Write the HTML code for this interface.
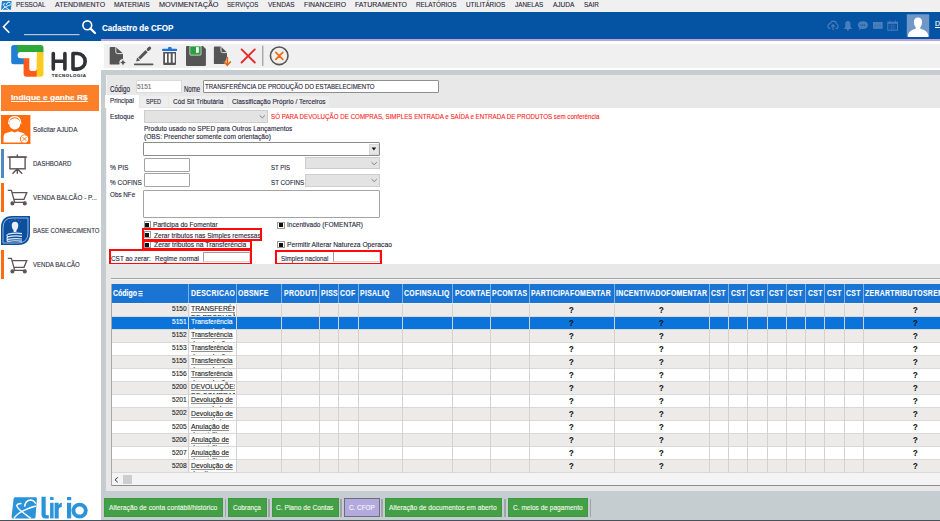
<!DOCTYPE html><html><head><meta charset="utf-8"><style>
html,body{margin:0;padding:0;width:940px;height:521px;overflow:hidden;background:#fff;position:relative;font-family:"Liberation Sans",sans-serif}
.b{position:absolute;box-sizing:border-box}
.t{position:absolute;white-space:nowrap;line-height:1;transform-origin:0 0;-webkit-text-stroke:0.12px currentColor}
svg{position:absolute;overflow:visible}

</style></head><body>
<div class="b" style="left:0.00px;top:0.00px;width:940.00px;height:11.60px;background:#f0f0f0"></div>
<span class="t" style="transform:scaleX(0.7783);left:16.20px;top:0.64px;font-size:8.1px;color:#26263a;">PESSOAL</span>
<span class="t" style="transform:scaleX(0.8624);left:54.80px;top:0.64px;font-size:8.1px;color:#26263a;">ATENDIMENTO</span>
<span class="t" style="transform:scaleX(0.8275);left:113.70px;top:0.64px;font-size:8.1px;color:#26263a;">MATERIAIS</span>
<span class="t" style="transform:scaleX(0.9017);left:158.50px;top:0.64px;font-size:8.1px;color:#26263a;">MOVIMENTAÇÃO</span>
<span class="t" style="transform:scaleX(0.7544);left:226.60px;top:0.64px;font-size:8.1px;color:#26263a;">SERVIÇOS</span>
<span class="t" style="transform:scaleX(0.7968);left:267.70px;top:0.64px;font-size:8.1px;color:#26263a;">VENDAS</span>
<span class="t" style="transform:scaleX(0.8404);left:303.60px;top:0.64px;font-size:8.1px;color:#26263a;">FINANCEIRO</span>
<span class="t" style="transform:scaleX(0.8601);left:355.00px;top:0.64px;font-size:8.1px;color:#26263a;">FATURAMENTO</span>
<span class="t" style="transform:scaleX(0.7859);left:416.00px;top:0.64px;font-size:8.1px;color:#26263a;">RELATÓRIOS</span>
<span class="t" style="transform:scaleX(0.7839);left:466.40px;top:0.64px;font-size:8.1px;color:#26263a;">UTILITÁRIOS</span>
<span class="t" style="transform:scaleX(0.7844);left:515.30px;top:0.64px;font-size:8.1px;color:#26263a;">JANELAS</span>
<span class="t" style="transform:scaleX(0.8034);left:553.20px;top:0.64px;font-size:8.1px;color:#26263a;">AJUDA</span>
<span class="t" style="transform:scaleX(0.7823);left:584.30px;top:0.64px;font-size:8.1px;color:#26263a;">SAIR</span>
<svg style="left:1.2px;top:0.9px" width="10.6" height="8.9" viewBox="11.4 497.2 25.6 21.3" preserveAspectRatio="none"><g transform="translate(11 496.5) scale(1) translate(-11 -496.5)"><path d="M15.2 497.3 H35.4 Q37.1 497.3 36.9 499 L35.5 516.9 Q35.4 518.4 33.9 518.4 H13 Q11.4 518.4 11.6 516.8 L13.6 498.8 Q13.8 497.3 15.2 497.3Z" fill="#1f80d2"/><path d="M21.6 503.6 Q18 503.2 16.6 505.4 Q17.6 508.5 21.8 511.5 Q26 515 30.8 518.4" stroke="#fff" stroke-width="2.2" fill="none"/><path d="M13.8 518.4 Q18 513 24.7 510.2 Q30 507.6 35.9 506" stroke="#fff" stroke-width="2.2" fill="none"/><path d="M24.6 506.6 Q25.4 500.5 30.2 500 Q33.6 500 35.8 503.6" stroke="#fff" stroke-width="2.2" fill="none"/></g></svg>
<div class="b" style="left:0.00px;top:11.60px;width:940.00px;height:27.10px;background:#0553a3"></div>
<div class="b" style="left:0.00px;top:38.70px;width:101.00px;height:2.80px;background:#0553a3"></div>
<div class="b" style="left:101.00px;top:38.70px;width:839.00px;height:2.80px;background:#b6a6d8"></div>
<svg style="left:0;top:0" width="940" height="45"><path d="M9.3 20.8 L3.5 26.8 L9.3 32.8" stroke="#fff" stroke-width="1.6" fill="none"/><rect x="24" y="34" width="55.5" height="1.2" fill="#b9c3d6"/><circle cx="87.3" cy="25.3" r="4.4" stroke="#fff" stroke-width="1.6" fill="none"/><path d="M90.5 28.6 L95 33" stroke="#fff" stroke-width="2.2" stroke-linecap="round"/></svg>
<span class="t" style="transform:scaleX(0.8262);left:101.50px;top:22.50px;font-size:9.8px;color:#fff;font-weight:700;">Cadastro de CFOP</span>
<div class="b" style="left:0.00px;top:41.50px;width:101.00px;height:479.50px;background:#fff"></div>
<div class="b" style="left:1.20px;top:84.60px;width:98.00px;height:26.40px;background:#fe7f2a"></div>
<span class="t" style="transform:scaleX(1.0334);left:10.80px;top:94.04px;font-size:8.1px;color:#fff;font-weight:700;text-decoration-line:underline;">Indique e ganhe R$</span>
<div class="b" style="left:104.20px;top:44.20px;width:835.80px;height:23.50px;background:#f0f0f0"></div>
<div class="b" style="left:101.00px;top:69.50px;width:839.00px;height:450.10px;background:#c6cdd1"></div>
<div class="b" style="left:106.00px;top:75.00px;width:834.00px;height:415.50px;background:#e8e8e8"></div>
<div class="b" style="left:106.00px;top:107.50px;width:834.00px;height:156.50px;background:#fff"></div>
<div class="b" style="left:0.00px;top:519.80px;width:940.00px;height:1.20px;background:#4a5158"></div>
<svg style="left:8px;top:43px" width="40" height="37" viewBox="0 0 40 37"><path d="M5.7 2.1 H16 V21.3 H5.7 Q3.2 21.3 3.2 18.8 V4.6 Q3.2 2.1 5.7 2.1Z" fill="#1f7fd4"/><path d="M9.2 2.1 H32.5 Q35.5 2.1 35.5 5.1 V9.4 H9.2Z" fill="#2ea836"/><path d="M28.6 9.2 H35.5 V30.8 Q35.5 33.8 32.5 33.8 H28.6Z" fill="#fbcb1e"/><path d="M15.6 14.6 H28.8 V33.8 H18.6 Q15.6 33.8 15.6 30.8Z" fill="#fe5a1a"/><path d="M12.6 8.9 H28.8 V25.2 Q28.8 28 26.2 28 H24 Q21.3 28 21.3 25.2 V15.3 H12.6 Q9.6 15.3 9.6 12.1 Q9.6 8.9 12.6 8.9Z" fill="#fff"/></svg>
<svg style="left:0;top:0" width="100" height="90"><path d="M53.3 53.5 V69.1 M64.9 53.5 V69.1 M53.3 61.3 H64.9 M73 53.5 V69.1" stroke="#2f3236" stroke-width="3.6" stroke-linecap="round" fill="none"/><path d="M73 53.5 H77.4 A7.8 7.8 0 0 1 77.4 69.1 H73" stroke="#2f3236" stroke-width="3.6" stroke-linejoin="round" fill="none"/></svg>
<span class="t" style="transform:scaleX(1.0000);left:51.70px;top:73.88px;font-size:4.4px;color:#2f3236;font-weight:700;letter-spacing:0.55px;">TECNOLOGIA</span>
<svg style="left:0;top:113px" width="32" height="34" viewBox="0 0 32 34"><rect x="1" y="2" width="29.4" height="29" fill="#fe6c10"/><circle cx="14.7" cy="10.8" r="5.6" fill="#fff"/><path d="M8.5 11 Q8.5 3.6 14.7 3.6 Q20.9 3.6 20.9 11" stroke="#fff" stroke-width="1.1" fill="none"/><path d="M3.6 29.5 V23.5 Q3.6 20 8 19.5 L12 18.3 Q14.7 20.5 17.4 18.3 L21.5 19.5 Q25.7 20.3 25.7 23.5 V29.5Z" fill="#fff"/><circle cx="24.5" cy="26" r="4.6" fill="#fe6c10"/><circle cx="24.5" cy="26" r="3.7" fill="#fff"/><path d="M22.6 24.1 L26.4 27.9 M26.4 24.1 L22.6 27.9" stroke="#fe6c10" stroke-width="0.9"/></svg>
<span class="t" style="transform:scaleX(0.7852);left:32.80px;top:125.93px;font-size:8.0px;color:#2e2e3e;">Solicitar AJUDA</span>
<div class="b" style="left:1.00px;top:149.00px;width:3.20px;height:29.00px;background:#4f88c6"></div>
<svg style="left:0;top:147px" width="32" height="34" viewBox="0 0 32 34" fill="none" stroke="#5f5455" stroke-width="1.4"><path d="M7.5 10.1 H27.1"/><path d="M17.3 10.1 V7.6"/><rect x="9.9" y="10.1" width="15.2" height="11.7"/><path d="M17.3 21.8 V26.7 M17.3 21.8 L12.5 26.7 M17.3 21.8 L22.2 26.7"/></svg>
<span class="t" style="transform:scaleX(0.8197);left:32.70px;top:160.04px;font-size:7.4px;color:#2e2e3e;">DASHBOARD</span>
<div class="b" style="left:1.00px;top:182.60px;width:3.20px;height:29.10px;background:#fe6c10"></div>
<svg style="left:0;top:181px" width="32" height="34" viewBox="0 0 32 34" fill="none" stroke="#5f5455" stroke-width="1.3"><path d="M7.8 9.3 H11.4 L14.7 21.3 H25.8"/><path d="M12.2 11.6 H26.8 L24 18.3 H13.9"/><circle cx="12.4" cy="22.4" r="1.4" fill="#5f5455"/><circle cx="24.8" cy="22.4" r="1.4" fill="#5f5455"/></svg>
<span class="t" style="transform:scaleX(0.8644);left:32.70px;top:194.14px;font-size:7.4px;color:#2e2e3e;">VENDA BALCÃO - P...</span>
<svg style="left:0;top:214px" width="32" height="34" viewBox="0 0 32 34"><path d="M12 2 H30 V19 Q30 31 18 31 H1 V14 Q1 2 12 2Z" fill="#0c4f9e"/><path d="M12.3 4 H28 V18.8 Q28 29 17.8 29 H3 V14 Q3 4 12.3 4Z" fill="none" stroke="#cfe0f2" stroke-width="0.7"/><path d="M13.6 16.6 Q11.7 14.2 11.7 11.4 Q11.7 7.8 15 7.8 Q18.3 7.8 18.3 11.4 Q18.3 14.2 16.4 16.6 V18 H13.6Z" fill="#e6eef8"/><path d="M10 8.3 L9.2 7.6 M20 8.3 L20.8 7.6 M15 6 V5.2 M11.8 6.6 L11.3 5.9 M18.2 6.6 L18.7 5.9" stroke="#9fbce0" stroke-width="0.6"/><path d="M8 20.2 Q15 18.6 22 19.6 M7.5 22.8 Q15 21.3 22 22.3 M7.5 25.4 Q15 24 22 25 M7.5 20.2 Q6.4 21.5 7.5 22.8 Q6.4 24.1 7.5 25.4 Q6.6 26.8 7.8 27.3 Q15 26.3 22 27.2" stroke="#e6eef8" stroke-width="1.2" fill="none"/></svg>
<span class="t" style="transform:scaleX(0.8045);left:32.70px;top:227.34px;font-size:7.4px;color:#2e2e3e;">BASE CONHECIMENTO</span>
<div class="b" style="left:1.00px;top:250.00px;width:3.20px;height:29.40px;background:#fe6c10"></div>
<svg style="left:0;top:249px" width="32" height="34" viewBox="0 0 32 34" fill="none" stroke="#5f5455" stroke-width="1.3"><path d="M7.8 9.3 H11.4 L14.7 21.3 H25.8"/><path d="M12.2 11.6 H26.8 L24 18.3 H13.9"/><circle cx="12.4" cy="22.4" r="1.4" fill="#5f5455"/><circle cx="24.8" cy="22.4" r="1.4" fill="#5f5455"/></svg>
<span class="t" style="transform:scaleX(0.8190);left:32.70px;top:261.04px;font-size:7.4px;color:#2e2e3e;">VENDA BALCÃO</span>
<svg style="left:0;top:0" width="100" height="521"><path d="M15.2 497.3 H35.4 Q37.1 497.3 36.9 499 L35.5 516.9 Q35.4 518.4 33.9 518.4 H13 Q11.4 518.4 11.6 516.8 L13.6 498.8 Q13.8 497.3 15.2 497.3Z" fill="#2b93d9"/><path d="M21.6 503.6 Q18 503.2 16.6 505.4 Q17.6 508.5 21.8 511.5 Q26 515 30.8 518.4" stroke="#fff" stroke-width="1.4" fill="none"/><path d="M13.8 518.4 Q18 513 24.7 510.2 Q30 507.6 35.9 506" stroke="#fff" stroke-width="1.4" fill="none"/><path d="M24.6 506.6 Q25.4 500.5 30.2 500 Q33.6 500 35.8 503.6" stroke="#fff" stroke-width="1.4" fill="none"/><path d="M41.5 496.7 H45.7 V514 Q45.7 515.2 47 515.2 H48.8 V518.4 H45.5 Q41.5 518.4 41.5 514.5Z" fill="#2b93d9"/><path d="M50.1 496.7 L53.6 497.2 V500.1 H50.1Z" fill="#2b93d9"/><rect x="50.1" y="502.8" width="3.5" height="15.6" fill="#2b93d9"/><path d="M54.6 518.4 V502.8 H58.7 V505 Q59.6 502.8 61.8 502.8 V507 Q58.7 507 58.7 510 V518.4Z" fill="#2b93d9"/><rect x="67" y="497" width="4.2" height="3.2" fill="#2b93d9"/><rect x="67" y="502.8" width="4.2" height="15.6" fill="#2b93d9"/><ellipse cx="79.6" cy="510.6" rx="6.2" ry="5.9" stroke="#2b93d9" stroke-width="3.8" fill="none"/></svg>
<svg style="left:0;top:0" width="300" height="70" viewBox="0 0 300 70"><path d="M110.6 46.9 H115.8 L123 53.6 V60 L119.3 64.6 H110.6 Q109.7 64.6 109.7 63.7 V47.8 Q109.7 46.9 110.6 46.9Z" fill="#555555"/><path d="M115.8 46.9 V52 Q115.8 53.6 117.4 53.6 H123" stroke="#f0f0f0" stroke-width="0.9" fill="none"/><circle cx="123" cy="62.6" r="3.6" fill="#f0f0f0"/><path d="M123 59.8 Q123.5 62.1 125.8 62.6 Q123.5 63.1 123 65.4 Q122.5 63.1 120.2 62.6 Q122.5 62.1 123 59.8Z" fill="#555555"/><path d="M136.1 61.6 L137.1 57.5 L140.2 60.6Z" fill="#555555"/><path d="M139.2 58.5 L146.6 51.1" stroke="#555555" stroke-width="3" /><path d="M148.3 49.4 L149.6 48.1" stroke="#555555" stroke-width="3.1" stroke-linecap="round"/><path d="M134.8 64.3 H152.6" stroke="#555555" stroke-width="1.7" stroke-linecap="round"/><rect x="162" y="48.7" width="15.2" height="2.3" rx="1" fill="#1a73e0"/><rect x="168" y="47" width="3.7" height="2.5" rx="1" fill="#1a73e0"/><path d="M163.2 52 H176 V64 Q176 65 175 65 H164.2 Q163.2 65 163.2 64Z" fill="#555555"/><rect x="165" y="53.5" width="2" height="9.2" fill="#fff"/><rect x="168.7" y="53.5" width="2" height="9.2" fill="#fff"/><rect x="172.7" y="53.5" width="2" height="9.2" fill="#fff"/><path d="M187 46 H203 L205.9 49 V64.9 Q205.9 65.9 204.9 65.9 H187 Q186 65.9 186 64.9 V47 Q186 46 187 46Z" fill="#555555"/><path d="M189.8 46 H201.1 V54.2 Q201.1 55.2 200.1 55.2 H190.8 Q189.8 55.2 189.8 54.2Z" fill="#2ea043" stroke="#fff" stroke-width="0.6"/><rect x="196" y="47.2" width="2.8" height="5.6" fill="#fff"/><path d="M214.8 46.6 H221 L227 52.6 V57 L224.5 64.1 H214.8 Q213.9 64.1 213.9 63.2 V47.5 Q213.9 46.6 214.8 46.6Z" fill="#555555"/><path d="M221 46.6 V51.2 Q221 52.6 222.4 52.6 H227" stroke="#f0f0f0" stroke-width="0.9" fill="none"/><path d="M227.3 57.6 V64" stroke="#e8650f" stroke-width="1.7" stroke-linecap="round"/><path d="M224.3 62 L227.3 65.3 L230.3 62" stroke="#e8650f" stroke-width="1.7" fill="none" stroke-linecap="round" stroke-linejoin="round"/><path d="M241.6 49.4 L254.8 62.5 M254.8 49.4 L241.6 62.5" stroke="#e82a2a" stroke-width="1.9" stroke-linecap="round"/><rect x="262.3" y="45.7" width="1" height="20.2" fill="#8a8a8a"/><circle cx="279.2" cy="55.8" r="8.8" stroke="#555" stroke-width="1.6" fill="none"/><path d="M275.8 52.4 L282.8 59.4 M282.8 52.4 L275.8 59.4" stroke="#f06a10" stroke-width="1.7" stroke-linecap="round"/></svg>
<div class="b" style="left:106.00px;top:75.00px;width:1.00px;height:189.00px;background:#f4f4f4"></div>
<span class="t" style="transform:scaleX(0.7514);left:110.30px;top:84.89px;font-size:8.4px;color:#25253a;">Código</span>
<div class="b" style="left:135.90px;top:80.30px;width:45.90px;height:12.60px;background:#fff;border:1px solid #dadada"></div>
<span class="t" style="transform:scaleX(0.8903);left:137.40px;top:82.72px;font-size:7.3px;color:#6e6e6e;">5151</span>
<span class="t" style="transform:scaleX(0.7186);left:183.70px;top:84.89px;font-size:8.4px;color:#25253a;">Nome</span>
<div class="b" style="left:202.50px;top:80.10px;width:236.90px;height:13.30px;background:#fff;border:1px solid #8e8e8e;border-radius:1px"></div>
<span class="t" style="transform:scaleX(0.8339);left:204.70px;top:82.92px;font-size:7.3px;color:#25253a;">TRANSFERÊNCIA DE PRODUÇÃO DO ESTABELECIMENTO</span>
<div class="b" style="left:105.40px;top:94.80px;width:33.20px;height:12.80px;background:#fff"></div>
<div class="b" style="left:139.70px;top:96.20px;width:27.90px;height:11.30px;background:#eeeeee"></div>
<div class="b" style="left:169.00px;top:96.20px;width:58.00px;height:11.30px;background:#eeeeee"></div>
<div class="b" style="left:229.00px;top:96.20px;width:99.60px;height:11.30px;background:#eeeeee"></div>
<span class="t" style="transform:scaleX(0.8222);left:110.20px;top:96.67px;font-size:7.6px;color:#25253a;">Principal</span>
<span class="t" style="transform:scaleX(0.7313);left:145.50px;top:98.07px;font-size:7.6px;color:#25253a;">SPED</span>
<span class="t" style="transform:scaleX(0.8577);left:172.50px;top:98.17px;font-size:7.6px;color:#25253a;">Cód Sit Tributária</span>
<span class="t" style="transform:scaleX(0.8641);left:231.80px;top:98.17px;font-size:7.6px;color:#25253a;">Classificação Próprio / Terceiros</span>
<span class="t" style="transform:scaleX(0.8556);left:109.80px;top:113.18px;font-size:7.7px;color:#25253a;">Estoque</span>
<div class="b" style="left:143.80px;top:110.30px;width:123.90px;height:12.70px;background:#e3e3e3;border:1px solid #cdcdcd"></div>
<svg style="left:0;top:0" width="940" height="300"><path d="M259.70 115.45 L262.30 117.95 L264.90 115.45" stroke="#6a6a6a" stroke-width="0.8" fill="none"/></svg>
<span class="t" style="transform:scaleX(0.8081);left:270.90px;top:113.28px;font-size:7.7px;color:#fe2424;">SÓ PARA DEVOLUÇÃO DE COMPRAS, SIMPLES ENTRADA e SAÍDA e ENTRADA DE PRODUTOS sem conferência</span>
<span class="t" style="transform:scaleX(0.8828);left:143.70px;top:125.14px;font-size:7.4px;color:#25253a;">Produto usado no SPED para Outros Lançamentos</span>
<span class="t" style="transform:scaleX(0.8955);left:143.70px;top:132.74px;font-size:7.4px;color:#25253a;">(OBS: Preencher somente com orientação)</span>
<div class="b" style="left:143.30px;top:142.40px;width:236.30px;height:13.40px;background:#fff;border:1px solid #8c8c8c;border-radius:1px"></div>
<div class="b" style="left:369.30px;top:143.60px;width:9.30px;height:11.00px;background:#e6e6e6;border:1px solid #d8d8d8"></div>
<svg style="left:0;top:0" width="940" height="300"><path d="M371.6 147.6 H376.2 L373.9 150.6Z" fill="#111"/></svg>
<span class="t" style="transform:scaleX(0.8618);left:110.00px;top:164.18px;font-size:7.7px;color:#25253a;">% PIS</span>
<div class="b" style="left:143.60px;top:158.30px;width:46.80px;height:13.30px;background:#fff;border:1px solid #a4a4a4;border-radius:1px"></div>
<span class="t" style="transform:scaleX(0.8367);left:110.00px;top:179.18px;font-size:7.7px;color:#25253a;">% COFINS</span>
<div class="b" style="left:143.60px;top:173.30px;width:46.80px;height:13.60px;background:#fff;border:1px solid #a4a4a4;border-radius:1px"></div>
<span class="t" style="transform:scaleX(0.7803);left:270.80px;top:164.08px;font-size:7.7px;color:#25253a;">ST PIS</span>
<div class="b" style="left:305.40px;top:157.40px;width:74.20px;height:12.10px;background:#e3e3e3;border:1px solid #cdcdcd"></div>
<svg style="left:0;top:0" width="940" height="300"><path d="M371.60 162.25 L374.20 164.75 L376.80 162.25" stroke="#6a6a6a" stroke-width="0.8" fill="none"/></svg>
<span class="t" style="transform:scaleX(0.8123);left:270.80px;top:179.18px;font-size:7.7px;color:#25253a;">ST COFINS</span>
<div class="b" style="left:305.40px;top:174.00px;width:74.20px;height:12.70px;background:#e3e3e3;border:1px solid #cdcdcd"></div>
<svg style="left:0;top:0" width="940" height="300"><path d="M371.60 179.15 L374.20 181.65 L376.80 179.15" stroke="#6a6a6a" stroke-width="0.8" fill="none"/></svg>
<span class="t" style="transform:scaleX(0.8202);left:110.00px;top:191.48px;font-size:7.7px;color:#25253a;">Obs NFe</span>
<div class="b" style="left:143.30px;top:189.50px;width:236.50px;height:28.70px;background:#fff;border:1px solid #a4a4a4;border-radius:1px"></div>
<div class="b" style="left:143.50px;top:221.30px;width:7.60px;height:7.20px;background:#fff;border:1px solid #9a9a9a"></div>
<div class="b" style="left:145.30px;top:222.90px;width:4.00px;height:4.00px;background:#111"></div>
<span class="t" style="transform:scaleX(0.8545);left:153.20px;top:220.88px;font-size:7.7px;color:#25253a;">Participa do Fomentar</span>
<div class="b" style="left:143.50px;top:231.30px;width:7.60px;height:7.20px;background:#fff;border:1px solid #9a9a9a"></div>
<div class="b" style="left:145.30px;top:232.90px;width:4.00px;height:4.00px;background:#111"></div>
<span class="t" style="transform:scaleX(0.8529);left:153.50px;top:231.88px;font-size:7.7px;color:#25253a;">Zerar tributos nas Simples remessas</span>
<div class="b" style="left:143.50px;top:241.10px;width:7.60px;height:7.20px;background:#fff;border:1px solid #9a9a9a"></div>
<div class="b" style="left:145.30px;top:242.70px;width:4.00px;height:4.00px;background:#111"></div>
<span class="t" style="transform:scaleX(0.8785);left:153.50px;top:240.78px;font-size:7.7px;color:#25253a;">Zerar tributos na Transferência</span>
<span class="t" style="transform:scaleX(0.8321);left:111.00px;top:254.88px;font-size:7.7px;color:#25253a;">CST ao zerar:</span>
<span class="t" style="transform:scaleX(0.8452);left:154.60px;top:255.08px;font-size:7.7px;color:#25253a;">Regime normal</span>
<div class="b" style="left:202.70px;top:251.70px;width:47.30px;height:10.60px;background:#fff;border:1px solid #d8d8d8;border-top-color:#a0a0a0;border-left-color:#a0a0a0"></div>
<div class="b" style="left:277.20px;top:221.60px;width:7.60px;height:7.20px;background:#fff;border:1px solid #9a9a9a"></div>
<div class="b" style="left:279.00px;top:223.20px;width:4.00px;height:4.00px;background:#111"></div>
<span class="t" style="transform:scaleX(0.8518);left:287.40px;top:221.38px;font-size:7.7px;color:#25253a;">Incentivado (FOMENTAR)</span>
<div class="b" style="left:277.20px;top:241.30px;width:7.60px;height:7.20px;background:#fff;border:1px solid #9a9a9a"></div>
<div class="b" style="left:279.00px;top:242.90px;width:4.00px;height:4.00px;background:#111"></div>
<span class="t" style="transform:scaleX(0.8735);left:287.00px;top:241.08px;font-size:7.7px;color:#25253a;">Permitir Alterar Natureza Operacao</span>
<span class="t" style="transform:scaleX(0.8150);left:281.40px;top:254.88px;font-size:7.7px;color:#25253a;">Simples nacional</span>
<div class="b" style="left:333.30px;top:251.40px;width:47.20px;height:11.10px;background:#fff;border:1px solid #d8d8d8;border-top-color:#a0a0a0;border-left-color:#a0a0a0"></div>
<div class="b" style="left:141.50px;top:228.40px;width:120.90px;height:12.50px;border:2px solid #ff0a0a"></div>
<div class="b" style="left:141.50px;top:239.80px;width:110.10px;height:10.20px;border:2px solid #ff0a0a"></div>
<div class="b" style="left:109.20px;top:249.00px;width:142.70px;height:15.60px;border:2px solid #ff0a0a"></div>
<div class="b" style="left:275.10px;top:249.80px;width:107.40px;height:14.80px;border:2px solid #ff0a0a"></div>
<div class="b" style="left:106.00px;top:264.40px;width:834.00px;height:226.10px;background:#e8e8e8"></div>
<div class="b" style="left:110.70px;top:278.30px;width:829.30px;height:1.00px;background:#a3a3a3"></div>
<div class="b" style="left:110.70px;top:279.30px;width:829.30px;height:1.00px;background:#f6f6f6"></div>
<div class="b" style="left:110.70px;top:284.20px;width:829.30px;height:201.30px;background:#f0f0f0;border-left:1px solid #a8a8a8;border-bottom:1px solid #8a8a8a"></div>
<div class="b" style="left:111.70px;top:284.20px;width:828.30px;height:19.30px;background:#1a74d4"></div>
<div class="b" style="left:111.70px;top:303.50px;width:828.30px;height:13.06px;background:#ecebea"></div>
<div class="b" style="left:189.60px;top:303.50px;width:46.40px;height:13.06px;background:#fdfdfd"></div>
<div class="b" style="left:111.70px;top:315.56px;width:828.30px;height:1.00px;background:#d9d9d9"></div>
<div class="b" style="left:111.70px;top:316.56px;width:828.30px;height:13.06px;background:#0a74da"></div>
<div class="b" style="left:111.70px;top:328.62px;width:828.30px;height:1.00px;background:#d9d9d9"></div>
<div class="b" style="left:111.70px;top:329.62px;width:828.30px;height:13.06px;background:#ecebea"></div>
<div class="b" style="left:189.60px;top:329.62px;width:46.40px;height:13.06px;background:#fdfdfd"></div>
<div class="b" style="left:111.70px;top:341.68px;width:828.30px;height:1.00px;background:#d9d9d9"></div>
<div class="b" style="left:111.70px;top:342.68px;width:828.30px;height:13.06px;background:#ffffff"></div>
<div class="b" style="left:189.60px;top:342.68px;width:46.40px;height:13.06px;background:#fdfdfd"></div>
<div class="b" style="left:111.70px;top:354.74px;width:828.30px;height:1.00px;background:#d9d9d9"></div>
<div class="b" style="left:111.70px;top:355.74px;width:828.30px;height:13.06px;background:#ecebea"></div>
<div class="b" style="left:189.60px;top:355.74px;width:46.40px;height:13.06px;background:#fdfdfd"></div>
<div class="b" style="left:111.70px;top:367.80px;width:828.30px;height:1.00px;background:#d9d9d9"></div>
<div class="b" style="left:111.70px;top:368.80px;width:828.30px;height:13.06px;background:#ffffff"></div>
<div class="b" style="left:189.60px;top:368.80px;width:46.40px;height:13.06px;background:#fdfdfd"></div>
<div class="b" style="left:111.70px;top:380.86px;width:828.30px;height:1.00px;background:#d9d9d9"></div>
<div class="b" style="left:111.70px;top:381.86px;width:828.30px;height:13.06px;background:#ecebea"></div>
<div class="b" style="left:189.60px;top:381.86px;width:46.40px;height:13.06px;background:#fdfdfd"></div>
<div class="b" style="left:111.70px;top:393.92px;width:828.30px;height:1.00px;background:#d9d9d9"></div>
<div class="b" style="left:111.70px;top:394.92px;width:828.30px;height:13.06px;background:#ffffff"></div>
<div class="b" style="left:189.60px;top:394.92px;width:46.40px;height:13.06px;background:#fdfdfd"></div>
<div class="b" style="left:111.70px;top:406.98px;width:828.30px;height:1.00px;background:#d9d9d9"></div>
<div class="b" style="left:111.70px;top:407.98px;width:828.30px;height:13.06px;background:#ecebea"></div>
<div class="b" style="left:189.60px;top:407.98px;width:46.40px;height:13.06px;background:#fdfdfd"></div>
<div class="b" style="left:111.70px;top:420.04px;width:828.30px;height:1.00px;background:#d9d9d9"></div>
<div class="b" style="left:111.70px;top:421.04px;width:828.30px;height:13.06px;background:#ffffff"></div>
<div class="b" style="left:189.60px;top:421.04px;width:46.40px;height:13.06px;background:#fdfdfd"></div>
<div class="b" style="left:111.70px;top:433.10px;width:828.30px;height:1.00px;background:#d9d9d9"></div>
<div class="b" style="left:111.70px;top:434.10px;width:828.30px;height:13.06px;background:#ecebea"></div>
<div class="b" style="left:189.60px;top:434.10px;width:46.40px;height:13.06px;background:#fdfdfd"></div>
<div class="b" style="left:111.70px;top:446.16px;width:828.30px;height:1.00px;background:#d9d9d9"></div>
<div class="b" style="left:111.70px;top:447.16px;width:828.30px;height:13.06px;background:#ffffff"></div>
<div class="b" style="left:189.60px;top:447.16px;width:46.40px;height:13.06px;background:#fdfdfd"></div>
<div class="b" style="left:111.70px;top:459.22px;width:828.30px;height:1.00px;background:#d9d9d9"></div>
<div class="b" style="left:111.70px;top:460.22px;width:828.30px;height:13.06px;background:#ecebea"></div>
<div class="b" style="left:189.60px;top:460.22px;width:46.40px;height:13.06px;background:#fdfdfd"></div>
<div class="b" style="left:111.70px;top:472.28px;width:828.30px;height:1.00px;background:#d9d9d9"></div>
<div class="b" style="left:188.10px;top:303.50px;width:1.00px;height:169.78px;background:#d2d2d2"></div>
<div class="b" style="left:188.10px;top:284.20px;width:1.00px;height:19.30px;background:#7fb0e6"></div>
<div class="b" style="left:235.50px;top:303.50px;width:1.00px;height:169.78px;background:#d2d2d2"></div>
<div class="b" style="left:235.50px;top:284.20px;width:1.00px;height:19.30px;background:#7fb0e6"></div>
<div class="b" style="left:281.00px;top:303.50px;width:1.00px;height:169.78px;background:#d2d2d2"></div>
<div class="b" style="left:281.00px;top:284.20px;width:1.00px;height:19.30px;background:#7fb0e6"></div>
<div class="b" style="left:319.20px;top:303.50px;width:1.00px;height:169.78px;background:#d2d2d2"></div>
<div class="b" style="left:319.20px;top:284.20px;width:1.00px;height:19.30px;background:#7fb0e6"></div>
<div class="b" style="left:337.90px;top:303.50px;width:1.00px;height:169.78px;background:#d2d2d2"></div>
<div class="b" style="left:337.90px;top:284.20px;width:1.00px;height:19.30px;background:#7fb0e6"></div>
<div class="b" style="left:357.50px;top:303.50px;width:1.00px;height:169.78px;background:#d2d2d2"></div>
<div class="b" style="left:357.50px;top:284.20px;width:1.00px;height:19.30px;background:#7fb0e6"></div>
<div class="b" style="left:402.20px;top:303.50px;width:1.00px;height:169.78px;background:#d2d2d2"></div>
<div class="b" style="left:402.20px;top:284.20px;width:1.00px;height:19.30px;background:#7fb0e6"></div>
<div class="b" style="left:452.40px;top:303.50px;width:1.00px;height:169.78px;background:#d2d2d2"></div>
<div class="b" style="left:452.40px;top:284.20px;width:1.00px;height:19.30px;background:#7fb0e6"></div>
<div class="b" style="left:490.20px;top:303.50px;width:1.00px;height:169.78px;background:#d2d2d2"></div>
<div class="b" style="left:490.20px;top:284.20px;width:1.00px;height:19.30px;background:#7fb0e6"></div>
<div class="b" style="left:529.20px;top:303.50px;width:1.00px;height:169.78px;background:#d2d2d2"></div>
<div class="b" style="left:529.20px;top:284.20px;width:1.00px;height:19.30px;background:#7fb0e6"></div>
<div class="b" style="left:614.10px;top:303.50px;width:1.00px;height:169.78px;background:#d2d2d2"></div>
<div class="b" style="left:614.10px;top:284.20px;width:1.00px;height:19.30px;background:#7fb0e6"></div>
<div class="b" style="left:708.80px;top:303.50px;width:1.00px;height:169.78px;background:#d2d2d2"></div>
<div class="b" style="left:708.80px;top:284.20px;width:1.00px;height:19.30px;background:#7fb0e6"></div>
<div class="b" style="left:728.06px;top:303.50px;width:1.00px;height:169.78px;background:#d2d2d2"></div>
<div class="b" style="left:728.06px;top:284.20px;width:1.00px;height:19.30px;background:#7fb0e6"></div>
<div class="b" style="left:747.32px;top:303.50px;width:1.00px;height:169.78px;background:#d2d2d2"></div>
<div class="b" style="left:747.32px;top:284.20px;width:1.00px;height:19.30px;background:#7fb0e6"></div>
<div class="b" style="left:766.58px;top:303.50px;width:1.00px;height:169.78px;background:#d2d2d2"></div>
<div class="b" style="left:766.58px;top:284.20px;width:1.00px;height:19.30px;background:#7fb0e6"></div>
<div class="b" style="left:785.84px;top:303.50px;width:1.00px;height:169.78px;background:#d2d2d2"></div>
<div class="b" style="left:785.84px;top:284.20px;width:1.00px;height:19.30px;background:#7fb0e6"></div>
<div class="b" style="left:805.10px;top:303.50px;width:1.00px;height:169.78px;background:#d2d2d2"></div>
<div class="b" style="left:805.10px;top:284.20px;width:1.00px;height:19.30px;background:#7fb0e6"></div>
<div class="b" style="left:824.36px;top:303.50px;width:1.00px;height:169.78px;background:#d2d2d2"></div>
<div class="b" style="left:824.36px;top:284.20px;width:1.00px;height:19.30px;background:#7fb0e6"></div>
<div class="b" style="left:843.62px;top:303.50px;width:1.00px;height:169.78px;background:#d2d2d2"></div>
<div class="b" style="left:843.62px;top:284.20px;width:1.00px;height:19.30px;background:#7fb0e6"></div>
<div class="b" style="left:862.88px;top:303.50px;width:1.00px;height:169.78px;background:#d2d2d2"></div>
<div class="b" style="left:862.88px;top:284.20px;width:1.00px;height:19.30px;background:#7fb0e6"></div>
<div class="b" style="left:111.70px;top:284.20px;width:76.40px;height:19.30px;overflow:hidden"><span class="t" style="transform:scaleX(0.8111);left:1.30px;top:4.82px;font-size:8.6px;color:#fff;font-weight:700;">Código</span></div>
<div class="b" style="left:189.10px;top:284.20px;width:46.40px;height:19.30px;overflow:hidden"><span class="t" style="transform:scaleX(0.8000);left:1.60px;top:4.82px;font-size:8.6px;color:#fff;font-weight:700;letter-spacing:0.4px;">DESCRICAO</span></div>
<div class="b" style="left:236.50px;top:284.20px;width:44.50px;height:19.30px;overflow:hidden"><span class="t" style="transform:scaleX(0.8000);left:1.50px;top:4.82px;font-size:8.6px;color:#fff;font-weight:700;letter-spacing:0.4px;">OBSNFE</span></div>
<div class="b" style="left:282.00px;top:284.20px;width:37.20px;height:19.30px;overflow:hidden"><span class="t" style="transform:scaleX(0.8000);left:1.60px;top:4.82px;font-size:8.6px;color:#fff;font-weight:700;letter-spacing:0.4px;">PRODUTI</span></div>
<div class="b" style="left:320.20px;top:284.20px;width:17.70px;height:19.30px;overflow:hidden"><span class="t" style="transform:scaleX(0.8000);left:1.20px;top:4.82px;font-size:8.6px;color:#fff;font-weight:700;letter-spacing:0.4px;">PISS</span></div>
<div class="b" style="left:338.90px;top:284.20px;width:18.60px;height:19.30px;overflow:hidden"><span class="t" style="transform:scaleX(0.8000);left:1.60px;top:4.82px;font-size:8.6px;color:#fff;font-weight:700;letter-spacing:0.4px;">COF</span></div>
<div class="b" style="left:358.50px;top:284.20px;width:43.70px;height:19.30px;overflow:hidden"><span class="t" style="transform:scaleX(0.8000);left:1.60px;top:4.82px;font-size:8.6px;color:#fff;font-weight:700;letter-spacing:0.4px;">PISALIQ</span></div>
<div class="b" style="left:403.20px;top:284.20px;width:49.20px;height:19.30px;overflow:hidden"><span class="t" style="transform:scaleX(0.8000);left:0.50px;top:4.82px;font-size:8.6px;color:#fff;font-weight:700;letter-spacing:0.4px;">COFINSALIQ</span></div>
<div class="b" style="left:453.40px;top:284.20px;width:36.80px;height:19.30px;overflow:hidden"><span class="t" style="transform:scaleX(0.8000);left:1.20px;top:4.82px;font-size:8.6px;color:#fff;font-weight:700;letter-spacing:0.4px;">PCONTAE</span></div>
<div class="b" style="left:491.20px;top:284.20px;width:38.00px;height:19.30px;overflow:hidden"><span class="t" style="transform:scaleX(0.8000);left:1.00px;top:4.82px;font-size:8.6px;color:#fff;font-weight:700;letter-spacing:0.4px;">PCONTAS</span></div>
<div class="b" style="left:530.20px;top:284.20px;width:83.90px;height:19.30px;overflow:hidden"><span class="t" style="transform:scaleX(0.8000);left:1.00px;top:4.82px;font-size:8.6px;color:#fff;font-weight:700;letter-spacing:0.4px;">PARTICIPAFOMENTAR</span></div>
<div class="b" style="left:615.10px;top:284.20px;width:93.70px;height:19.30px;overflow:hidden"><span class="t" style="transform:scaleX(0.8000);left:0.90px;top:4.82px;font-size:8.6px;color:#fff;font-weight:700;letter-spacing:0.4px;">INCENTIVADOFOMENTAR</span></div>
<div class="b" style="left:709.80px;top:284.20px;width:18.26px;height:19.30px;overflow:hidden"><span class="t" style="transform:scaleX(0.8000);left:1.60px;top:4.82px;font-size:8.6px;color:#fff;font-weight:700;letter-spacing:0.4px;">CST</span></div>
<div class="b" style="left:729.06px;top:284.20px;width:18.26px;height:19.30px;overflow:hidden"><span class="t" style="transform:scaleX(0.8000);left:1.60px;top:4.82px;font-size:8.6px;color:#fff;font-weight:700;letter-spacing:0.4px;">CST</span></div>
<div class="b" style="left:748.32px;top:284.20px;width:18.26px;height:19.30px;overflow:hidden"><span class="t" style="transform:scaleX(0.8000);left:1.60px;top:4.82px;font-size:8.6px;color:#fff;font-weight:700;letter-spacing:0.4px;">CST</span></div>
<div class="b" style="left:767.58px;top:284.20px;width:18.26px;height:19.30px;overflow:hidden"><span class="t" style="transform:scaleX(0.8000);left:1.60px;top:4.82px;font-size:8.6px;color:#fff;font-weight:700;letter-spacing:0.4px;">CST</span></div>
<div class="b" style="left:786.84px;top:284.20px;width:18.26px;height:19.30px;overflow:hidden"><span class="t" style="transform:scaleX(0.8000);left:1.60px;top:4.82px;font-size:8.6px;color:#fff;font-weight:700;letter-spacing:0.4px;">CST</span></div>
<div class="b" style="left:806.10px;top:284.20px;width:18.26px;height:19.30px;overflow:hidden"><span class="t" style="transform:scaleX(0.8000);left:1.60px;top:4.82px;font-size:8.6px;color:#fff;font-weight:700;letter-spacing:0.4px;">CST</span></div>
<div class="b" style="left:825.36px;top:284.20px;width:18.26px;height:19.30px;overflow:hidden"><span class="t" style="transform:scaleX(0.8000);left:1.60px;top:4.82px;font-size:8.6px;color:#fff;font-weight:700;letter-spacing:0.4px;">CST</span></div>
<div class="b" style="left:844.62px;top:284.20px;width:18.26px;height:19.30px;overflow:hidden"><span class="t" style="transform:scaleX(0.8000);left:1.60px;top:4.82px;font-size:8.6px;color:#fff;font-weight:700;letter-spacing:0.4px;">CST</span></div>
<div class="b" style="left:863.88px;top:284.20px;width:95.62px;height:19.30px;overflow:hidden"><span class="t" style="transform:scaleX(0.8000);left:1.62px;top:4.82px;font-size:8.6px;color:#fff;font-weight:700;letter-spacing:0.4px;">ZERARTRIBUTOSREMESSAS</span></div>
<svg style="left:0;top:0" width="940" height="521"><path d="M138.4 291.5 H142.6 M138.4 293.6 H142.6 M138.4 295.7 H142.6" stroke="#fff" stroke-width="1.1"/></svg>
<span class="t" style="transform:scaleX(0.8698);left:171.90px;top:304.97px;font-size:7.6px;color:#1a1a1a;">5150</span>
<div class="b" style="left:189.60px;top:303.50px;width:45.40px;height:12.06px;overflow:hidden"><span class="t" style="transform:scaleX(0.9000);left:1.50px;top:1.57px;font-size:7.6px;color:#1a1a1a;text-decoration-color:#909090;text-decoration-thickness:0.6px;text-decoration-line:underline;">TRANSFERÊNCIA</span></div>
<div class="b" style="left:189.60px;top:303.50px;width:45.40px;height:12.06px;overflow:hidden"><span class="t" style="transform:scaleX(0.9000);left:1.50px;top:10.17px;font-size:7.6px;color:#1a1a1a;">DE PRODUÇÃO</span></div>
<span class="t" style="transform:scaleX(0.8000);left:568.70px;top:304.57px;font-size:9.6px;color:#111;font-weight:700;">?</span>
<span class="t" style="transform:scaleX(0.8000);left:658.90px;top:304.57px;font-size:9.6px;color:#111;font-weight:700;">?</span>
<span class="t" style="transform:scaleX(0.8000);left:913.20px;top:304.57px;font-size:9.6px;color:#111;font-weight:700;">?</span>
<span class="t" style="transform:scaleX(0.8698);left:171.90px;top:318.03px;font-size:7.6px;color:#fff;">5151</span>
<div class="b" style="left:189.60px;top:316.56px;width:45.40px;height:12.06px;overflow:hidden"><span class="t" style="transform:scaleX(0.9000);left:1.50px;top:1.57px;font-size:7.6px;color:#fff;text-decoration-color:#909090;text-decoration-thickness:0.6px;">Transferência</span></div>
<div class="b" style="left:189.60px;top:316.56px;width:45.40px;height:12.06px;overflow:hidden"><span class="t" style="transform:scaleX(0.9000);left:1.50px;top:10.17px;font-size:7.6px;color:#fff;">de produção</span></div>
<span class="t" style="transform:scaleX(0.8000);left:568.70px;top:317.63px;font-size:9.6px;color:#111;font-weight:700;">?</span>
<span class="t" style="transform:scaleX(0.8000);left:658.90px;top:317.63px;font-size:9.6px;color:#111;font-weight:700;">?</span>
<span class="t" style="transform:scaleX(0.8000);left:913.20px;top:317.63px;font-size:9.6px;color:#111;font-weight:700;">?</span>
<span class="t" style="transform:scaleX(0.8698);left:171.90px;top:331.09px;font-size:7.6px;color:#1a1a1a;">5152</span>
<div class="b" style="left:189.60px;top:329.62px;width:45.40px;height:12.06px;overflow:hidden"><span class="t" style="transform:scaleX(0.9000);left:1.50px;top:1.57px;font-size:7.6px;color:#1a1a1a;text-decoration-color:#909090;text-decoration-thickness:0.6px;text-decoration-line:underline;">Transferência</span></div>
<div class="b" style="left:189.60px;top:329.62px;width:45.40px;height:12.06px;overflow:hidden"><span class="t" style="transform:scaleX(0.9000);left:1.50px;top:10.17px;font-size:7.6px;color:#1a1a1a;">de produção</span></div>
<span class="t" style="transform:scaleX(0.8000);left:568.70px;top:330.69px;font-size:9.6px;color:#111;font-weight:700;">?</span>
<span class="t" style="transform:scaleX(0.8000);left:658.90px;top:330.69px;font-size:9.6px;color:#111;font-weight:700;">?</span>
<span class="t" style="transform:scaleX(0.8000);left:913.20px;top:330.69px;font-size:9.6px;color:#111;font-weight:700;">?</span>
<span class="t" style="transform:scaleX(0.8698);left:171.90px;top:344.15px;font-size:7.6px;color:#1a1a1a;">5153</span>
<div class="b" style="left:189.60px;top:342.68px;width:45.40px;height:12.06px;overflow:hidden"><span class="t" style="transform:scaleX(0.9000);left:1.50px;top:1.57px;font-size:7.6px;color:#1a1a1a;text-decoration-color:#909090;text-decoration-thickness:0.6px;text-decoration-line:underline;">Transferência</span></div>
<div class="b" style="left:189.60px;top:342.68px;width:45.40px;height:12.06px;overflow:hidden"><span class="t" style="transform:scaleX(0.9000);left:1.50px;top:10.17px;font-size:7.6px;color:#1a1a1a;">de produção</span></div>
<span class="t" style="transform:scaleX(0.8000);left:568.70px;top:343.75px;font-size:9.6px;color:#111;font-weight:700;">?</span>
<span class="t" style="transform:scaleX(0.8000);left:658.90px;top:343.75px;font-size:9.6px;color:#111;font-weight:700;">?</span>
<span class="t" style="transform:scaleX(0.8000);left:913.20px;top:343.75px;font-size:9.6px;color:#111;font-weight:700;">?</span>
<span class="t" style="transform:scaleX(0.8698);left:171.90px;top:357.21px;font-size:7.6px;color:#1a1a1a;">5155</span>
<div class="b" style="left:189.60px;top:355.74px;width:45.40px;height:12.06px;overflow:hidden"><span class="t" style="transform:scaleX(0.9000);left:1.50px;top:1.57px;font-size:7.6px;color:#1a1a1a;text-decoration-color:#909090;text-decoration-thickness:0.6px;text-decoration-line:underline;">Transferência</span></div>
<div class="b" style="left:189.60px;top:355.74px;width:45.40px;height:12.06px;overflow:hidden"><span class="t" style="transform:scaleX(0.9000);left:1.50px;top:10.17px;font-size:7.6px;color:#1a1a1a;">de produção</span></div>
<span class="t" style="transform:scaleX(0.8000);left:568.70px;top:356.81px;font-size:9.6px;color:#111;font-weight:700;">?</span>
<span class="t" style="transform:scaleX(0.8000);left:658.90px;top:356.81px;font-size:9.6px;color:#111;font-weight:700;">?</span>
<span class="t" style="transform:scaleX(0.8000);left:913.20px;top:356.81px;font-size:9.6px;color:#111;font-weight:700;">?</span>
<span class="t" style="transform:scaleX(0.8698);left:171.90px;top:370.27px;font-size:7.6px;color:#1a1a1a;">5156</span>
<div class="b" style="left:189.60px;top:368.80px;width:45.40px;height:12.06px;overflow:hidden"><span class="t" style="transform:scaleX(0.9000);left:1.50px;top:1.57px;font-size:7.6px;color:#1a1a1a;text-decoration-color:#909090;text-decoration-thickness:0.6px;text-decoration-line:underline;">Transferência</span></div>
<div class="b" style="left:189.60px;top:368.80px;width:45.40px;height:12.06px;overflow:hidden"><span class="t" style="transform:scaleX(0.9000);left:1.50px;top:10.17px;font-size:7.6px;color:#1a1a1a;">de produção</span></div>
<span class="t" style="transform:scaleX(0.8000);left:568.70px;top:369.87px;font-size:9.6px;color:#111;font-weight:700;">?</span>
<span class="t" style="transform:scaleX(0.8000);left:658.90px;top:369.87px;font-size:9.6px;color:#111;font-weight:700;">?</span>
<span class="t" style="transform:scaleX(0.8000);left:913.20px;top:369.87px;font-size:9.6px;color:#111;font-weight:700;">?</span>
<span class="t" style="transform:scaleX(0.8698);left:171.90px;top:383.33px;font-size:7.6px;color:#1a1a1a;">5200</span>
<div class="b" style="left:189.60px;top:381.86px;width:45.40px;height:12.06px;overflow:hidden"><span class="t" style="transform:scaleX(0.9000);left:1.50px;top:1.57px;font-size:7.6px;color:#1a1a1a;text-decoration-color:#909090;text-decoration-thickness:0.6px;text-decoration-line:underline;">DEVOLUÇÕES</span></div>
<div class="b" style="left:189.60px;top:381.86px;width:45.40px;height:12.06px;overflow:hidden"><span class="t" style="transform:scaleX(0.9000);left:1.50px;top:10.17px;font-size:7.6px;color:#1a1a1a;">DE COMPRAS</span></div>
<span class="t" style="transform:scaleX(0.8000);left:568.70px;top:382.93px;font-size:9.6px;color:#111;font-weight:700;">?</span>
<span class="t" style="transform:scaleX(0.8000);left:658.90px;top:382.93px;font-size:9.6px;color:#111;font-weight:700;">?</span>
<span class="t" style="transform:scaleX(0.8000);left:913.20px;top:382.93px;font-size:9.6px;color:#111;font-weight:700;">?</span>
<span class="t" style="transform:scaleX(0.8698);left:171.90px;top:396.39px;font-size:7.6px;color:#1a1a1a;">5201</span>
<div class="b" style="left:189.60px;top:394.92px;width:45.40px;height:12.06px;overflow:hidden"><span class="t" style="transform:scaleX(0.9000);left:1.50px;top:1.57px;font-size:7.6px;color:#1a1a1a;text-decoration-color:#909090;text-decoration-thickness:0.6px;text-decoration-line:underline;">Devolução de</span></div>
<div class="b" style="left:189.60px;top:394.92px;width:45.40px;height:12.06px;overflow:hidden"><span class="t" style="transform:scaleX(0.9000);left:1.50px;top:10.17px;font-size:7.6px;color:#1a1a1a;">mercadoria</span></div>
<span class="t" style="transform:scaleX(0.8000);left:568.70px;top:395.99px;font-size:9.6px;color:#111;font-weight:700;">?</span>
<span class="t" style="transform:scaleX(0.8000);left:658.90px;top:395.99px;font-size:9.6px;color:#111;font-weight:700;">?</span>
<span class="t" style="transform:scaleX(0.8000);left:913.20px;top:395.99px;font-size:9.6px;color:#111;font-weight:700;">?</span>
<span class="t" style="transform:scaleX(0.8698);left:171.90px;top:409.45px;font-size:7.6px;color:#1a1a1a;">5202</span>
<div class="b" style="left:189.60px;top:407.98px;width:45.40px;height:12.06px;overflow:hidden"><span class="t" style="transform:scaleX(0.9000);left:1.50px;top:1.57px;font-size:7.6px;color:#1a1a1a;text-decoration-color:#909090;text-decoration-thickness:0.6px;text-decoration-line:underline;">Devolução de</span></div>
<div class="b" style="left:189.60px;top:407.98px;width:45.40px;height:12.06px;overflow:hidden"><span class="t" style="transform:scaleX(0.9000);left:1.50px;top:10.17px;font-size:7.6px;color:#1a1a1a;">mercadoria</span></div>
<span class="t" style="transform:scaleX(0.8000);left:568.70px;top:409.05px;font-size:9.6px;color:#111;font-weight:700;">?</span>
<span class="t" style="transform:scaleX(0.8000);left:658.90px;top:409.05px;font-size:9.6px;color:#111;font-weight:700;">?</span>
<span class="t" style="transform:scaleX(0.8000);left:913.20px;top:409.05px;font-size:9.6px;color:#111;font-weight:700;">?</span>
<span class="t" style="transform:scaleX(0.8698);left:171.90px;top:422.51px;font-size:7.6px;color:#1a1a1a;">5205</span>
<div class="b" style="left:189.60px;top:421.04px;width:45.40px;height:12.06px;overflow:hidden"><span class="t" style="transform:scaleX(0.9000);left:1.50px;top:1.57px;font-size:7.6px;color:#1a1a1a;text-decoration-color:#909090;text-decoration-thickness:0.6px;text-decoration-line:underline;">Anulação de</span></div>
<div class="b" style="left:189.60px;top:421.04px;width:45.40px;height:12.06px;overflow:hidden"><span class="t" style="transform:scaleX(0.9000);left:1.50px;top:10.17px;font-size:7.6px;color:#1a1a1a;">de crédito</span></div>
<span class="t" style="transform:scaleX(0.8000);left:568.70px;top:422.11px;font-size:9.6px;color:#111;font-weight:700;">?</span>
<span class="t" style="transform:scaleX(0.8000);left:658.90px;top:422.11px;font-size:9.6px;color:#111;font-weight:700;">?</span>
<span class="t" style="transform:scaleX(0.8000);left:913.20px;top:422.11px;font-size:9.6px;color:#111;font-weight:700;">?</span>
<span class="t" style="transform:scaleX(0.8698);left:171.90px;top:435.57px;font-size:7.6px;color:#1a1a1a;">5206</span>
<div class="b" style="left:189.60px;top:434.10px;width:45.40px;height:12.06px;overflow:hidden"><span class="t" style="transform:scaleX(0.9000);left:1.50px;top:1.57px;font-size:7.6px;color:#1a1a1a;text-decoration-color:#909090;text-decoration-thickness:0.6px;text-decoration-line:underline;">Anulação de</span></div>
<div class="b" style="left:189.60px;top:434.10px;width:45.40px;height:12.06px;overflow:hidden"><span class="t" style="transform:scaleX(0.9000);left:1.50px;top:10.17px;font-size:7.6px;color:#1a1a1a;">de crédito</span></div>
<span class="t" style="transform:scaleX(0.8000);left:568.70px;top:435.17px;font-size:9.6px;color:#111;font-weight:700;">?</span>
<span class="t" style="transform:scaleX(0.8000);left:658.90px;top:435.17px;font-size:9.6px;color:#111;font-weight:700;">?</span>
<span class="t" style="transform:scaleX(0.8000);left:913.20px;top:435.17px;font-size:9.6px;color:#111;font-weight:700;">?</span>
<span class="t" style="transform:scaleX(0.8698);left:171.90px;top:448.63px;font-size:7.6px;color:#1a1a1a;">5207</span>
<div class="b" style="left:189.60px;top:447.16px;width:45.40px;height:12.06px;overflow:hidden"><span class="t" style="transform:scaleX(0.9000);left:1.50px;top:1.57px;font-size:7.6px;color:#1a1a1a;text-decoration-color:#909090;text-decoration-thickness:0.6px;text-decoration-line:underline;">Anulação de</span></div>
<div class="b" style="left:189.60px;top:447.16px;width:45.40px;height:12.06px;overflow:hidden"><span class="t" style="transform:scaleX(0.9000);left:1.50px;top:10.17px;font-size:7.6px;color:#1a1a1a;">de crédito</span></div>
<span class="t" style="transform:scaleX(0.8000);left:568.70px;top:448.23px;font-size:9.6px;color:#111;font-weight:700;">?</span>
<span class="t" style="transform:scaleX(0.8000);left:658.90px;top:448.23px;font-size:9.6px;color:#111;font-weight:700;">?</span>
<span class="t" style="transform:scaleX(0.8000);left:913.20px;top:448.23px;font-size:9.6px;color:#111;font-weight:700;">?</span>
<span class="t" style="transform:scaleX(0.8698);left:171.90px;top:461.69px;font-size:7.6px;color:#1a1a1a;">5208</span>
<div class="b" style="left:189.60px;top:460.22px;width:45.40px;height:12.06px;overflow:hidden"><span class="t" style="transform:scaleX(0.9000);left:1.50px;top:1.57px;font-size:7.6px;color:#1a1a1a;text-decoration-color:#909090;text-decoration-thickness:0.6px;text-decoration-line:underline;">Devolução de</span></div>
<div class="b" style="left:189.60px;top:460.22px;width:45.40px;height:12.06px;overflow:hidden"><span class="t" style="transform:scaleX(0.9000);left:1.50px;top:10.17px;font-size:7.6px;color:#1a1a1a;">de ativo</span></div>
<span class="t" style="transform:scaleX(0.8000);left:568.70px;top:461.29px;font-size:9.6px;color:#111;font-weight:700;">?</span>
<span class="t" style="transform:scaleX(0.8000);left:658.90px;top:461.29px;font-size:9.6px;color:#111;font-weight:700;">?</span>
<span class="t" style="transform:scaleX(0.8000);left:913.20px;top:461.29px;font-size:9.6px;color:#111;font-weight:700;">?</span>
<div class="b" style="left:111.70px;top:473.40px;width:828.30px;height:11.60px;background:#f4f4f4"></div>
<svg style="left:0;top:0" width="940" height="521"><path d="M117.8 477.3 L115 479.8 L117.8 482.3" stroke="#333" stroke-width="1" fill="none"/></svg>
<div class="b" style="left:122.50px;top:475.20px;width:9.80px;height:8.80px;background:#cdcdcd"></div>
<div class="b" style="left:110.70px;top:484.60px;width:829.30px;height:1.00px;background:#8d8d8d"></div>
<div class="b" style="left:110.70px;top:473.40px;width:1.00px;height:12.20px;background:#a8a8a8"></div>
<svg style="left:0;top:0" width="940" height="45"><path d="M830.6 28.6 Q827.9 28.6 827.9 26.1 Q827.9 23.8 830.3 23.6 Q831 21.1 833.3 21.1 Q836 21.1 836.4 23.8 Q838.1 24.2 838.1 26.2 Q838.1 28.6 835.6 28.6" stroke="#4a7fbe" stroke-width="1.1" fill="none"/><path d="M833 30.2 V24.8 M831.2 26.6 L833 24.8 L834.8 26.6" stroke="#4a7fbe" stroke-width="1.1" fill="none"/><path d="M843.6 29 Q845.3 28 845.3 25.8 V24.2 Q845.3 21 847.9 21 Q850.5 21 850.5 24.2 V25.8 Q850.5 28 852.2 29Z" fill="#4a7fbe"/><circle cx="847.9" cy="29.8" r="1" fill="#4a7fbe"/><path d="M862.9 21.2 Q867.9 21.2 867.9 25.1 Q867.9 29 862.9 29 Q861.9 29 861 28.8 L859 30.6 L859.6 28.2 Q857.9 27.1 857.9 25.1 Q857.9 21.2 862.9 21.2Z" fill="#4a7fbe"/><path d="M860.6 25.1 H865.2" stroke="#0a4f9e" stroke-width="1.2" stroke-dasharray="1 0.8"/><rect x="873" y="22" width="9.7" height="6.8" fill="#4a7fbe"/><path d="M874.3 26.8 L876 24.6 L877.8 26 L879.4 24.6 L881.2 26.8" stroke="#2f66a8" stroke-width="0.6" fill="none"/><rect x="887.8" y="22.2" width="9.7" height="8" stroke="#4a7fbe" stroke-width="1" fill="none"/><rect x="887.8" y="22.2" width="9.7" height="1.6" fill="#4a7fbe"/><path d="M889.8 20.7 V22.5 M895.5 20.7 V22.5" stroke="#4a7fbe" stroke-width="1"/><path d="M889.5 25.3 H895.8 M889.5 27.1 H895.8 M889.5 28.8 H895.8 M891.6 24.3 V29.8 M893.7 24.3 V29.8" stroke="#4a7fbe" stroke-width="0.4"/><rect x="906.8" y="14.3" width="22.4" height="22.7" fill="#6f98c9"/><path d="M918 17.4 Q922.1 17.4 922.1 22 Q922.1 25.5 920.3 27.3 V28.8 Q927.6 30.5 928.3 35 V37 H908 V35 Q908.7 30.5 915.7 28.8 V27.3 Q913.9 25.5 913.9 22 Q913.9 17.4 918 17.4Z" fill="#fff"/></svg>
<span class="t" style="transform:scaleX(0.9167);left:935.00px;top:20.25px;font-size:7.5px;color:#fff;text-decoration-line:underline;">D</span>
<div class="b" style="left:104.10px;top:497.90px;width:119.30px;height:18.90px;background:#43a046;border:1px solid #3b9a3f"></div>
<span class="t" style="transform:scaleX(0.8648);left:109.40px;top:504.00px;font-size:7.8px;color:#f3f8ea;">Alteração de conta contábil/histórico</span>
<div class="b" style="left:228.40px;top:497.90px;width:38.30px;height:18.90px;background:#43a046;border:1px solid #3b9a3f"></div>
<span class="t" style="transform:scaleX(0.8239);left:233.20px;top:504.00px;font-size:7.8px;color:#f3f8ea;">Cobrança</span>
<div class="b" style="left:271.80px;top:497.90px;width:67.20px;height:18.90px;background:#43a046;border:1px solid #3b9a3f"></div>
<span class="t" style="transform:scaleX(0.8491);left:276.40px;top:504.00px;font-size:7.8px;color:#f3f8ea;">C. Plano de Contas</span>
<div class="b" style="left:344.10px;top:498.20px;width:35.80px;height:18.80px;background:#b4a9dd;border:1px solid #6d6c80"></div>
<span class="t" style="transform:scaleX(0.8116);left:348.90px;top:503.90px;font-size:7.8px;color:#fbfbff;">C. CFOP</span>
<div class="b" style="left:384.60px;top:497.90px;width:117.50px;height:18.90px;background:#43a046;border:1px solid #3b9a3f"></div>
<span class="t" style="transform:scaleX(0.8563);left:389.20px;top:504.00px;font-size:7.8px;color:#f3f8ea;">Alteração de documentos em aberto</span>
<div class="b" style="left:508.00px;top:497.90px;width:80.00px;height:18.90px;background:#43a046;border:1px solid #3b9a3f"></div>
<span class="t" style="transform:scaleX(0.8413);left:512.70px;top:504.00px;font-size:7.8px;color:#f3f8ea;">C. meios de pagamento</span>
<div class="b" style="left:224.60px;top:498.50px;width:1.60px;height:18.00px;background:#9ea4a8"></div>
<div class="b" style="left:268.20px;top:498.50px;width:1.60px;height:18.00px;background:#9ea4a8"></div>
<div class="b" style="left:340.40px;top:498.50px;width:1.60px;height:18.00px;background:#9ea4a8"></div>
<div class="b" style="left:381.10px;top:498.50px;width:1.60px;height:18.00px;background:#9ea4a8"></div>
<div class="b" style="left:504.40px;top:498.50px;width:1.60px;height:18.00px;background:#9ea4a8"></div>
<div class="b" style="left:589.60px;top:498.50px;width:1.60px;height:18.00px;background:#9ea4a8"></div>
</body></html>
